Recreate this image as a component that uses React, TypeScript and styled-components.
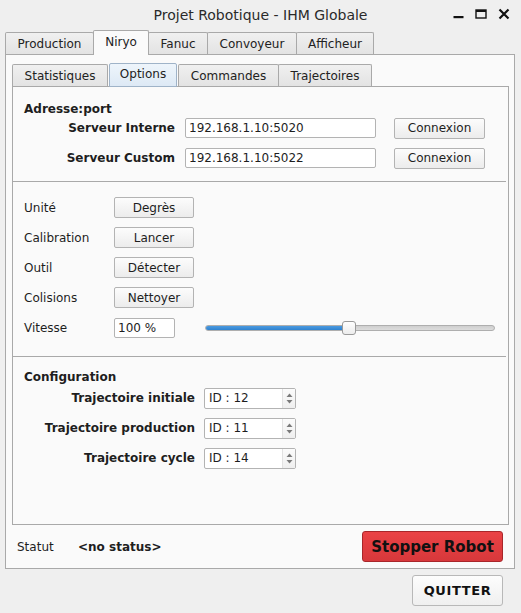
import React from "react";
import styled, { createGlobalStyle, css } from "styled-components";

const Global = createGlobalStyle`
  html, body { margin: 0; padding: 0; background: #efefef; }
  body { font-family: "DejaVu Sans", "Noto Sans", sans-serif; font-size: 12px; color: #1e1e1e; }
  * { box-sizing: border-box; }
`;

const Window = styled.div`
  width: 521px;
  height: 613px;
  background: #efefef;
  display: flex;
  flex-direction: column;
  overflow: hidden;
`;

const TitleBar = styled.div`
  height: 28px;
  display: grid;
  grid-template-columns: 1fr auto 1fr;
  align-items: center;
  font-size: 14px;
  color: #2a2a2a;
`;

const TitleText = styled.div`
  grid-column: 2;
  padding-top: 1px;
`;

const Controls = styled.div`
  grid-column: 3;
  justify-self: end;
  display: flex;
  align-items: center;
  gap: 11px;
  padding-right: 11px;
`;

const Main = styled.div`
  display: flex;
  flex-direction: column;
  padding: 2px 6px 0 5px;
`;

const TabBar = styled.div<{ $h: number }>`
  display: flex;
  align-items: flex-end;
  height: ${(p) => p.$h}px;
  position: relative;
  z-index: 1;
`;

const Tab = styled.div<{ $active?: boolean; $blue?: boolean; $w: number }>`
  width: ${(p) => p.$w}px;
  height: 22px;
  display: flex;
  align-items: center;
  justify-content: center;
  border: 1px solid #a9a9a9;
  border-bottom: none;
  border-radius: 2px 2px 0 0;
  background: linear-gradient(#f0f0f0, #e3e3e3);
  margin-right: -1px;
  color: #222;
  ${(p) =>
    p.$active &&
    css`
      height: 25px;
      margin-bottom: -1px;
      background: #fafafa;
      padding-bottom: 2px;
      position: relative;
      z-index: 2;
    `}
  ${(p) =>
    p.$blue &&
    css`
      height: 24px;
      margin-bottom: -1px;
      margin-left: 2px;
      margin-right: 1px;
      background: linear-gradient(#eef5fb, #dde9f5);
      border-color: #9fb3c8;
      border-bottom: 1px solid #9fb3c8;
      padding-bottom: 3px;
      position: relative;
      z-index: 2;
    `}
`;

const OuterPane = styled.div`
  height: 515px;
  border: 1px solid #a9a9a9;
  background: #fafafa;
  padding: 7px 6px 0 6px;
  display: flex;
  flex-direction: column;
`;

const InnerPane = styled.div`
  height: 439px;
  width: 497px;
  border: 1px solid #a9a9a9;
  background: #fafafa;
  display: flex;
  flex-direction: column;
`;

const Section = styled.div<{ $pt: number; $pb: number; $gap: number }>`
  display: flex;
  flex-direction: column;
  gap: ${(p) => p.$gap}px;
  padding: ${(p) => p.$pt}px 11px ${(p) => p.$pb}px 11px;
`;

const Heading = styled.div<{ $mb: number }>`
  font-weight: bold;
  line-height: 16px;
  height: 16px;
  margin-bottom: ${(p) => p.$mb}px;
`;

const Separator = styled.div`
  height: 1px;
  background: #a9a9a9;
  margin-right: 2px;
`;

const Row = styled.div<{ $h: number }>`
  display: flex;
  align-items: center;
  height: ${(p) => p.$h}px;
`;

const Label = styled.div<{ $w: number; $right?: boolean; $bold?: boolean }>`
  width: ${(p) => p.$w}px;
  flex: none;
  text-align: ${(p) => (p.$right ? "right" : "left")};
  font-weight: ${(p) => (p.$bold ? "bold" : "normal")};
  margin-right: ${(p) => (p.$right ? 10 : 0)}px;
  white-space: nowrap;
`;

const Input = styled.div<{ $w: number }>`
  width: ${(p) => p.$w}px;
  height: 20px;
  flex: none;
  border: 1px solid #b3b3b3;
  border-radius: 2px;
  background: #fff;
  padding-left: 3px;
  display: flex;
  align-items: center;
  color: #1e1e1e;
`;

const Button = styled.div<{ $w: number; $h?: number; $ml?: number }>`
  width: ${(p) => p.$w}px;
  height: ${(p) => p.$h ?? 21}px;
  margin-left: ${(p) => p.$ml ?? 0}px;
  flex: none;
  display: flex;
  align-items: center;
  justify-content: center;
  border: 1px solid #b3b3b3;
  border-radius: 2px;
  background: linear-gradient(#fcfcfc, #ececec);
  color: #1e1e1e;
`;

const SpinBox = styled.div`
  width: 92px;
  height: 21px;
  flex: none;
  margin-left: -1px;
  border: 1px solid #b3b3b3;
  border-radius: 2px;
  background: #fff;
  display: flex;
  align-items: center;
`;

const SpinText = styled.div`
  flex: 1;
  padding-left: 4px;
`;

const SpinArrows = styled.div`
  width: 13px;
  height: 100%;
  border-left: 1px solid #e2e2e2;
  background: linear-gradient(#fbfbfb, #efefef);
  display: flex;
  align-items: center;
  justify-content: center;
`;

const SliderWrap = styled.div`
  position: relative;
  width: 290px;
  height: 16px;
  margin-left: 30px;
  display: flex;
  align-items: center;
`;

const Groove = styled.div`
  width: 100%;
  height: 6px;
  border: 1px solid #aeaeae;
  border-radius: 3px;
  background: linear-gradient(#cfcfcf, #dcdcdc);
  overflow: hidden;
`;

const Fill = styled.div`
  height: 100%;
  background: linear-gradient(#4a9ae0, #2f82cf);
  border-right: 1px solid #2a6fb0;
`;

const Handle = styled.div`
  position: absolute;
  top: 1px;
  width: 14px;
  height: 14px;
  margin-left: -7px;
  border: 1px solid #9a9a9a;
  border-radius: 3px;
  background: linear-gradient(#ffffff, #ececec);
`;

const StatusRow = styled.div`
  flex: 1;
  display: flex;
  align-items: center;
  padding: 0 5px 0 5px;
`;

const StatusValue = styled.div`
  font-weight: bold;
  flex: 1;
`;

const StopButton = styled.div`
  width: 141px;
  height: 31px;
  display: flex;
  align-items: center;
  justify-content: center;
  border: 1px solid #a8262a;
  border-radius: 3px;
  background: linear-gradient(#ea4245, #d7383b);
  font-weight: bold;
  font-size: 15px;
  color: #111;
`;

const Footer = styled.div`
  display: flex;
  justify-content: flex-end;
  padding: 6px 12px 0 0;
`;

const QuitButton = styled.div`
  width: 91px;
  height: 31px;
  display: flex;
  align-items: center;
  justify-content: center;
  border: 1px solid #b8b8b8;
  border-radius: 3px;
  background: linear-gradient(#fdfdfd, #efefef);
  font-weight: bold;
  font-size: 13px;
  letter-spacing: 0.6px;
  color: #111;
`;

const Spacer = styled.div`
  flex: 1;
`;

const Minimize = () => (
  <svg width="11" height="12" viewBox="0 0 11 12">
    <rect x="0.5" y="8" width="10" height="2.2" fill="#111" />
  </svg>
);
const Maximize = () => (
  <svg width="12" height="12" viewBox="0 0 12 12">
    <rect x="1" y="2" width="10" height="8" fill="none" stroke="#111" strokeWidth="1.4" />
    <rect x="1" y="2" width="10" height="2" fill="#111" />
  </svg>
);
const Close = () => (
  <svg width="12" height="12" viewBox="0 0 12 12">
    <path d="M1.5 1.5 L10.5 10.5 M10.5 1.5 L1.5 10.5" stroke="#111" strokeWidth="2.2" />
  </svg>
);

const Arrows = () => (
  <svg width="7" height="13" viewBox="0 0 7 13">
    <path d="M3.5 1.5 L6.5 5 L0.5 5 Z" fill="#7a7a7a" />
    <path d="M0.5 8 L6.5 8 L3.5 11.5 Z" fill="#7a7a7a" />
  </svg>
);

const outerTabs = [
  { t: "Production", w: 89 },
  { t: "Niryo", w: 56, a: true },
  { t: "Fanuc", w: 60 },
  { t: "Convoyeur", w: 90 },
  { t: "Afficheur", w: 78 },
];

const innerTabs = [
  { t: "Statistiques", w: 96 },
  { t: "Options", w: 68, a: true },
  { t: "Commandes", w: 101 },
  { t: "Trajectoires", w: 94 },
];

const servers = [
  { l: "Serveur Interne", v: "192.168.1.10:5020" },
  { l: "Serveur Custom", v: "192.168.1.10:5022" },
];

const options = [
  { l: "Unité", b: "Degrès" },
  { l: "Calibration", b: "Lancer" },
  { l: "Outil", b: "Détecter" },
  { l: "Colisions", b: "Nettoyer" },
];

const trajectories = [
  { l: "Trajectoire initiale", v: "ID : 12" },
  { l: "Trajectoire production", v: "ID : 11" },
  { l: "Trajectoire cycle", v: "ID : 14" },
];

export default function App() {
  const speed = 49.5;
  return (
    <>
      <Global />
      <Window>
        <TitleBar>
          <TitleText>Projet Robotique - IHM Globale</TitleText>
          <Controls>
            <Minimize />
            <Maximize />
            <Close />
          </Controls>
        </TitleBar>
        <Main>
          <TabBar $h={24}>
            {outerTabs.map((t) => (
              <Tab key={t.t} $w={t.w} $active={t.a}>
                {t.t}
              </Tab>
            ))}
          </TabBar>
          <OuterPane>
            <TabBar $h={24}>
              {innerTabs.map((t) => (
                <Tab key={t.t} $w={t.w} $blue={t.a}>
                  {t.t}
                </Tab>
              ))}
            </TabBar>
            <InnerPane>
              <Section $pt={14} $pb={13} $gap={10}>
                <Heading $mb={-9}>Adresse:port</Heading>
                {servers.map((s) => (
                  <Row key={s.l} $h={20}>
                    <Label $w={151} $right $bold>
                      {s.l}
                    </Label>
                    <Input $w={191}>{s.v}</Input>
                    <Button $w={91} $ml={18} $h={21}>
                      Connexion
                    </Button>
                  </Row>
                ))}
              </Section>
              <Separator />
              <Section $pt={15} $pb={18} $gap={9}>
                {options.map((o) => (
                  <Row key={o.l} $h={21}>
                    <Label $w={90}>{o.l}</Label>
                    <Button $w={80}>{o.b}</Button>
                  </Row>
                ))}
                <Row $h={21}>
                  <Label $w={90}>Vitesse</Label>
                  <Input $w={61}>100 %</Input>
                  <SliderWrap>
                    <Groove>
                      <Fill style={{ width: `${speed}%` }} />
                    </Groove>
                    <Handle style={{ left: `${speed}%` }} />
                  </SliderWrap>
                </Row>
              </Section>
              <Separator />
              <Section $pt={12} $pb={0} $gap={10}>
                <Heading $mb={-7}>Configuration</Heading>
                {trajectories.map((t) => (
                  <Row key={t.l} $h={20}>
                    <Label $w={171} $right $bold>
                      {t.l}
                    </Label>
                    <SpinBox>
                      <SpinText>{t.v}</SpinText>
                      <SpinArrows>
                        <Arrows />
                      </SpinArrows>
                    </SpinBox>
                  </Row>
                ))}
              </Section>
              <Spacer />
            </InnerPane>
            <StatusRow>
              <Label $w={61}>Statut</Label>
              <StatusValue>&lt;no status&gt;</StatusValue>
              <StopButton>Stopper Robot</StopButton>
            </StatusRow>
          </OuterPane>
          <Footer>
            <QuitButton>QUITTER</QuitButton>
          </Footer>
        </Main>
      </Window>
    </>
  );
}
